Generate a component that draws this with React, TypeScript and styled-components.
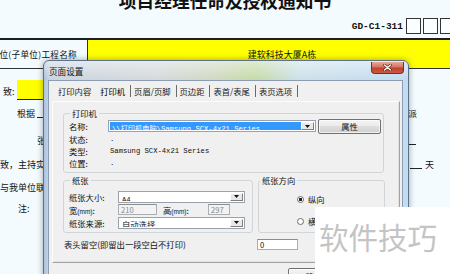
import styled, { createGlobalStyle } from "styled-components";

const Global = createGlobalStyle`
    html, body {
        margin: 0;
        padding: 0;
    }
    body {
        width: 450px;
        height: 274px;
        overflow: hidden;
        background: #f3fbfe;
        font-family: "Noto Sans CJK SC", "Noto Sans", sans-serif;
        color: #111;
    }
`

const Page = styled.div`
    position: relative;
    width: 450px;
    height: 274px;
    overflow: hidden;
`

const Title = styled.h1`
    margin: -9px 0 0;
    height: 18px;
    line-height: 18px;
    font-size: 17.7px;
    font-weight: 700;
    text-align: center;
`

const CodeRow = styled.div`
    display: flex;
    justify-content: flex-end;
    align-items: center;
    gap: 2px;
    height: 16px;
    margin: 9px -5px 0 0;
`

const Code = styled.span`
    font-family: "Liberation Mono", monospace;
    font-weight: 700;
    font-size: 9.5px;
    margin-right: 1px;
`

const CodeBox = styled.span`
    box-sizing: border-box;
    width: 15px;
    height: 16px;
    border: 1px solid #333;
    background: #fbfeff;
`

const FormTable = styled.div`
    margin-top: 4px;
    border-top: 2px solid #1e1e1e;
`

const NameRow = styled.div`
    display: grid;
    grid-template-columns: 88px 1fr;
    height: 28px;
    border-bottom: 1px solid #333;
`

const NameLabel = styled.div`
    display: flex;
    align-items: center;
    justify-content: flex-end;
    padding-right: 10px;
    border-right: 1px solid #333;
    white-space: nowrap;
    font-size: 8.6px;
    letter-spacing: .3px;
`

const NameValue = styled.div`
    display: flex;
    align-items: center;
    justify-content: center;
    padding-left: 26px;
    background: #ffff00;
    font-size: 9px;
`

const Line = styled.div<{ $top: number }>`
    display: grid;
    grid-template-columns: 406px 1fr;
    height: 16px;
    margin-top: ${p => p.$top}px;
    font-size: 9px;
`

const Side = styled.div<{ $indent?: number }>`
    display: flex;
    align-items: center;
    height: 100%;
    padding-left: ${p => p.$indent ?? 0}px;
    white-space: nowrap;
`

const Blank = styled.span<{ $w: number; $h: number; $fill?: string }>`
    align-self: flex-end;
    box-sizing: border-box;
    width: ${p => p.$w}px;
    height: ${p => p.$h}px;
    margin: 0 3px 3px 2px;
    background: ${p => p.$fill ?? "transparent"};
    border-bottom: 1px solid #222;
`

/* dialog window */

const Window = styled.div`
    position: absolute;
    left: 43px;
    top: 60px;
    box-sizing: border-box;
    width: 366px;
    height: 240px;
    padding: 0 5px 0 4px;
    display: flex;
    flex-direction: column;
    border: 1px solid #5d7189;
    border-radius: 6px 6px 0 0;
    background:
        linear-gradient(180deg, rgba(255, 255, 255, .45), rgba(255, 255, 255, 0) 18px),
        linear-gradient(90deg, #a9c3e2 0, #c9d5e0 5px, #d6dadc 30%, #d2d9c8 45%, #c6dba8 58%, #cde1ea 70%, #c4dcf2 100%);
    box-shadow: 0 0 6px rgba(0, 0, 0, .35);
    font-size: 8.3px;
    color: #111;
`

const TitleBar = styled.div`
    display: flex;
    justify-content: space-between;
    align-items: flex-start;
    height: 19px;
`

const Caption = styled.span`
    margin: 5px 0 0 1px;
    font-size: 8.6px;
    line-height: 10px;
`

const CloseButton = styled.div`
    display: flex;
    align-items: center;
    justify-content: center;
    box-sizing: border-box;
    width: 33px;
    height: 12px;
    margin: 1px -1px 0 0;
    border: 1px solid #7b2c22;
    border-top: none;
    border-radius: 0 0 4px 4px;
    background: linear-gradient(180deg, #e9a898 0, #d47565 45%, #c2412e 55%, #c95a42 100%);
`

const Client = styled.div`
    flex: 1;
    display: flex;
    flex-direction: column;
    border: 1px solid #8c9db3;
    border-bottom: none;
    background: #f0f0f0;
`

const TabStrip = styled.div`
    display: flex;
    align-items: center;
    height: 20px;
    padding-left: 6px;
`

const Tab = styled.span<{ $sep?: boolean; $active?: boolean }>`
    padding: 0 5px 0 3px;
    line-height: 12px;
    border-right: 1px solid ${p => (p.$sep ? "#6a6a6a" : "transparent")};
    color: ${p => (p.$active ? "#000" : "#1a1a1a")};
    white-space: nowrap;
`

const TabPanel = styled.div`
    box-sizing: border-box;
    height: 162px;
    margin: 0 2px 0 3px;
    padding: 5px 0 0 10px;
    border: 1px solid #a3a3a3;
    border-top-color: #fcfcfc;
    border-left-color: #fcfcfc;
    box-shadow: inset -1px -1px 0 #e2e2e2;
`

const Group = styled.fieldset<{ $w: number; $pad?: string }>`
    box-sizing: border-box;
    width: ${p => p.$w}px;
    margin: 0;
    padding: ${p => p.$pad ?? "0 2px 3px 5px"};
    border: 1px solid #d0d5d9;
    border-radius: 3px;
`

const Legend = styled.legend`
    margin-left: 1px;
    padding: 0 2px;
    line-height: 12px;
`

const PrinterGrid = styled.div`
    display: grid;
    grid-template-columns: 39px 1fr;
    grid-template-rows: 14px repeat(3, 12px);
    align-items: center;
`

const Value = styled.span`
    padding-left: 2px;
    font-family: "Liberation Mono", "Noto Sans CJK SC", monospace;
    font-size: 7.2px;
`

const NameField = styled.div`
    display: flex;
    align-items: center;
    gap: 2px;
`

const Combo = styled.div<{ $w: number }>`
    box-sizing: border-box;
    display: flex;
    width: ${p => p.$w}px;
    height: 12px;
    padding: 1px;
    border: 1px solid #9aa3ad;
    background: #fff;
`

const ComboText = styled.span<{ $selected?: boolean }>`
    flex: 1;
    overflow: hidden;
    padding-left: 2px;
    line-height: 10px;
    white-space: nowrap;
    background: ${p => (p.$selected ? "#3399ff" : "transparent")};
    color: ${p => (p.$selected ? "#fff" : "#111")};
`

const Mono = styled.span`
    font-family: "Liberation Mono", "Noto Sans CJK SC", monospace;
    font-size: 7.2px;
`

const ComboArrow = styled.span`
    display: flex;
    align-items: center;
    justify-content: center;
    width: 11px;
    border: 1px solid;
    border-color: #fff #808080 #808080 #fff;
    background: #e8e8e8;
`

const PushButton = styled.div<{ $w: number }>`
    box-sizing: border-box;
    display: flex;
    align-items: center;
    justify-content: center;
    width: ${p => p.$w}px;
    height: 15px;
    border: 1px solid #707070;
    border-radius: 2px;
    background: linear-gradient(180deg, #f3f3f3 0, #ebebeb 50%, #dedede 50%, #cfcfcf 100%);
    box-shadow: inset 0 0 0 1px rgba(255, 255, 255, .7);
`

const LowerRow = styled.div`
    display: flex;
    gap: 5px;
    margin-top: 1px;
`

const PaperGrid = styled.div`
    display: grid;
    grid-template-columns: 49px 1fr;
    grid-auto-rows: 13px;
    align-items: center;
    padding-top: 4px;
`

const SizeField = styled.div`
    display: flex;
    align-items: center;
`

const TextBox = styled.span<{ $w: number; $disabled?: boolean }>`
    box-sizing: border-box;
    display: flex;
    align-items: center;
    width: ${p => p.$w}px;
    height: 11px;
    padding-left: 2px;
    border: 1px solid #abadb3;
    border-top-color: #8a8c93;
    background: ${p => (p.$disabled ? "#f3f3f3" : "#fff")};
    color: ${p => (p.$disabled ? "#8a8a8a" : "#111")};
    font-size: 7.6px;
`

const SubLabel = styled.span`
    width: 45px;
    margin-left: 6px;
`

const Small = styled.span`
    font-family: "Liberation Sans", sans-serif;
    font-size: 6.5px;
`

const RadioList = styled.div`
    display: flex;
    flex-direction: column;
    gap: 10px;
    padding: 7px 0 0 38px;
`

const RadioRow = styled.label`
    display: flex;
    align-items: center;
    gap: 4px;
    height: 12px;
`

const RadioDot = styled.span<{ $checked?: boolean }>`
    box-sizing: border-box;
    width: 7px;
    height: 7px;
    border: 1px solid #6c6c6c;
    border-radius: 50%;
    background: ${p => (p.$checked ? "radial-gradient(circle, #222 0 1.4px, #fff 1.6px)" : "#fff")};
`

const MarginRow = styled.div`
    display: grid;
    grid-template-columns: 193px auto auto;
    align-items: center;
    height: 20px;
    margin-top: 1px;
    padding-left: 1px;
`

const Unit = styled.span`
    margin-left: 4px;
`

const ButtonRow = styled.div`
    display: flex;
    gap: 5px;
    margin-top: 5px;
    padding-left: 239px;
`

const Watermark = styled.div`
    position: absolute;
    left: 315px;
    top: 207px;
    width: 140px;
    height: 70px;
    box-sizing: border-box;
    padding: 14px 0 0 4px;
    background: #fff;
    color: #c4c4c4;
    font-size: 29.5px;
    line-height: 30px;
    white-space: nowrap;
`

const ArrowIcon = () => (
    <svg width="5" height="3" viewBox="0 0 5 3">
        <path d="M0 0h5L2.5 3z" fill="#111" />
    </svg>
)

const CloseIcon = () => (
    <svg width="9" height="7" viewBox="0 0 9 7">
        <path d="M1.5 1 7.5 6M7.5 1 1.5 6" stroke="#5a1a12" strokeWidth="2.6" strokeLinecap="round" />
        <path d="M1.5 1 7.5 6M7.5 1 1.5 6" stroke="#fff" strokeWidth="1.4" strokeLinecap="round" />
    </svg>
)

const tabs = ["打印内容", "打印机", "页眉/页脚", "页边距", "表首/表尾", "表页选项"]

export default function App() {
    return (
        <Page>
            <Global />
            <Title>项目经理任命及授权通知书</Title>
            <CodeRow>
                <Code>GD-C1-311</Code>
                <CodeBox />
                <CodeBox />
                <CodeBox />
            </CodeRow>
            <FormTable>
                <NameRow>
                    <NameLabel>单位(子单位)工程名称</NameLabel>
                    <NameValue>建软科技大厦A栋</NameValue>
                </NameRow>
            </FormTable>

            <Line $top={11}>
                <Side $indent={3}>致:<Blank $w={60} $h={20} $fill="#ffff00" /></Side>
                <Side />
            </Line>
            <Line $top={9}>
                <Side $indent={17}>根据<Blank $w={30} $h={12} /></Side>
                <Side $indent={2}>派</Side>
            </Line>
            <Line $top={11}>
                <Side $indent={37}>张</Side>
                <Side><Blank $w={8} $h={10} /></Side>
            </Line>
            <Line $top={8}>
                <Side>致，主持实施</Side>
                <Side $indent={2}><Blank $w={12} $h={10} />天</Side>
            </Line>
            <Line $top={7}>
                <Side>与我单位联系</Side>
                <Side />
            </Line>
            <Line $top={5}>
                <Side $indent={18}>注:</Side>
                <Side />
            </Line>

            <Window>
                <TitleBar>
                    <Caption>页面设置</Caption>
                    <CloseButton><CloseIcon /></CloseButton>
                </TitleBar>
                <Client>
                    <TabStrip>
                        {tabs.map((t, i) => (
                            <Tab key={t} $sep={i > 0} $active={i === 1}>{t}</Tab>
                        ))}
                    </TabStrip>
                    <TabPanel>
                        <Group $w={321}>
                            <Legend>打印机</Legend>
                            <PrinterGrid>
                                <span>名称:</span>
                                <NameField>
                                    <Combo $w={208}>
                                        <ComboText $selected><Mono>\\打印机电脑\Samsung SCX-4x21 Series</Mono></ComboText>
                                        <ComboArrow><ArrowIcon /></ComboArrow>
                                    </Combo>
                                    <PushButton $w={63}>属性</PushButton>
                                </NameField>
                                <span>状态:</span>
                                <Value>.</Value>
                                <span>类型:</span>
                                <Value>Samsung SCX-4x21 Series</Value>
                                <span>位置:</span>
                                <Value>.</Value>
                            </PrinterGrid>
                        </Group>

                        <LowerRow>
                            <Group $w={190}>
                                <Legend>纸张</Legend>
                                <PaperGrid>
                                    <span>纸张大小:</span>
                                    <Combo $w={127}>
                                        <ComboText><Mono>A4</Mono></ComboText>
                                        <ComboArrow><ArrowIcon /></ComboArrow>
                                    </Combo>
                                    <span>宽<Small>(mm)</Small>:</span>
                                    <SizeField>
                                        <TextBox $w={39} $disabled>210</TextBox>
                                        <SubLabel>高<Small>(mm)</Small>:</SubLabel>
                                        <TextBox $w={22} $disabled>297</TextBox>
                                    </SizeField>
                                    <span>纸张来源:</span>
                                    <Combo $w={127}>
                                        <ComboText>自动选择</ComboText>
                                        <ComboArrow><ArrowIcon /></ComboArrow>
                                    </Combo>
                                </PaperGrid>
                            </Group>
                            <Group $w={127} $pad="0 2px 3px 0">
                                <Legend>纸张方向</Legend>
                                <RadioList>
                                    <RadioRow><RadioDot $checked />纵向</RadioRow>
                                    <RadioRow><RadioDot />横向</RadioRow>
                                </RadioList>
                            </Group>
                        </LowerRow>

                        <MarginRow>
                            <span>表头留空(即留出一段空白不打印)</span>
                            <TextBox $w={41}>0</TextBox>
                            <Unit>毫米</Unit>
                        </MarginRow>
                    </TabPanel>
                    <ButtonRow>
                        <PushButton $w={52}>确定</PushButton>
                        <PushButton $w={52}>取消</PushButton>
                    </ButtonRow>
                </Client>
            </Window>

            <Watermark>软件技巧</Watermark>
        </Page>
    )
}
